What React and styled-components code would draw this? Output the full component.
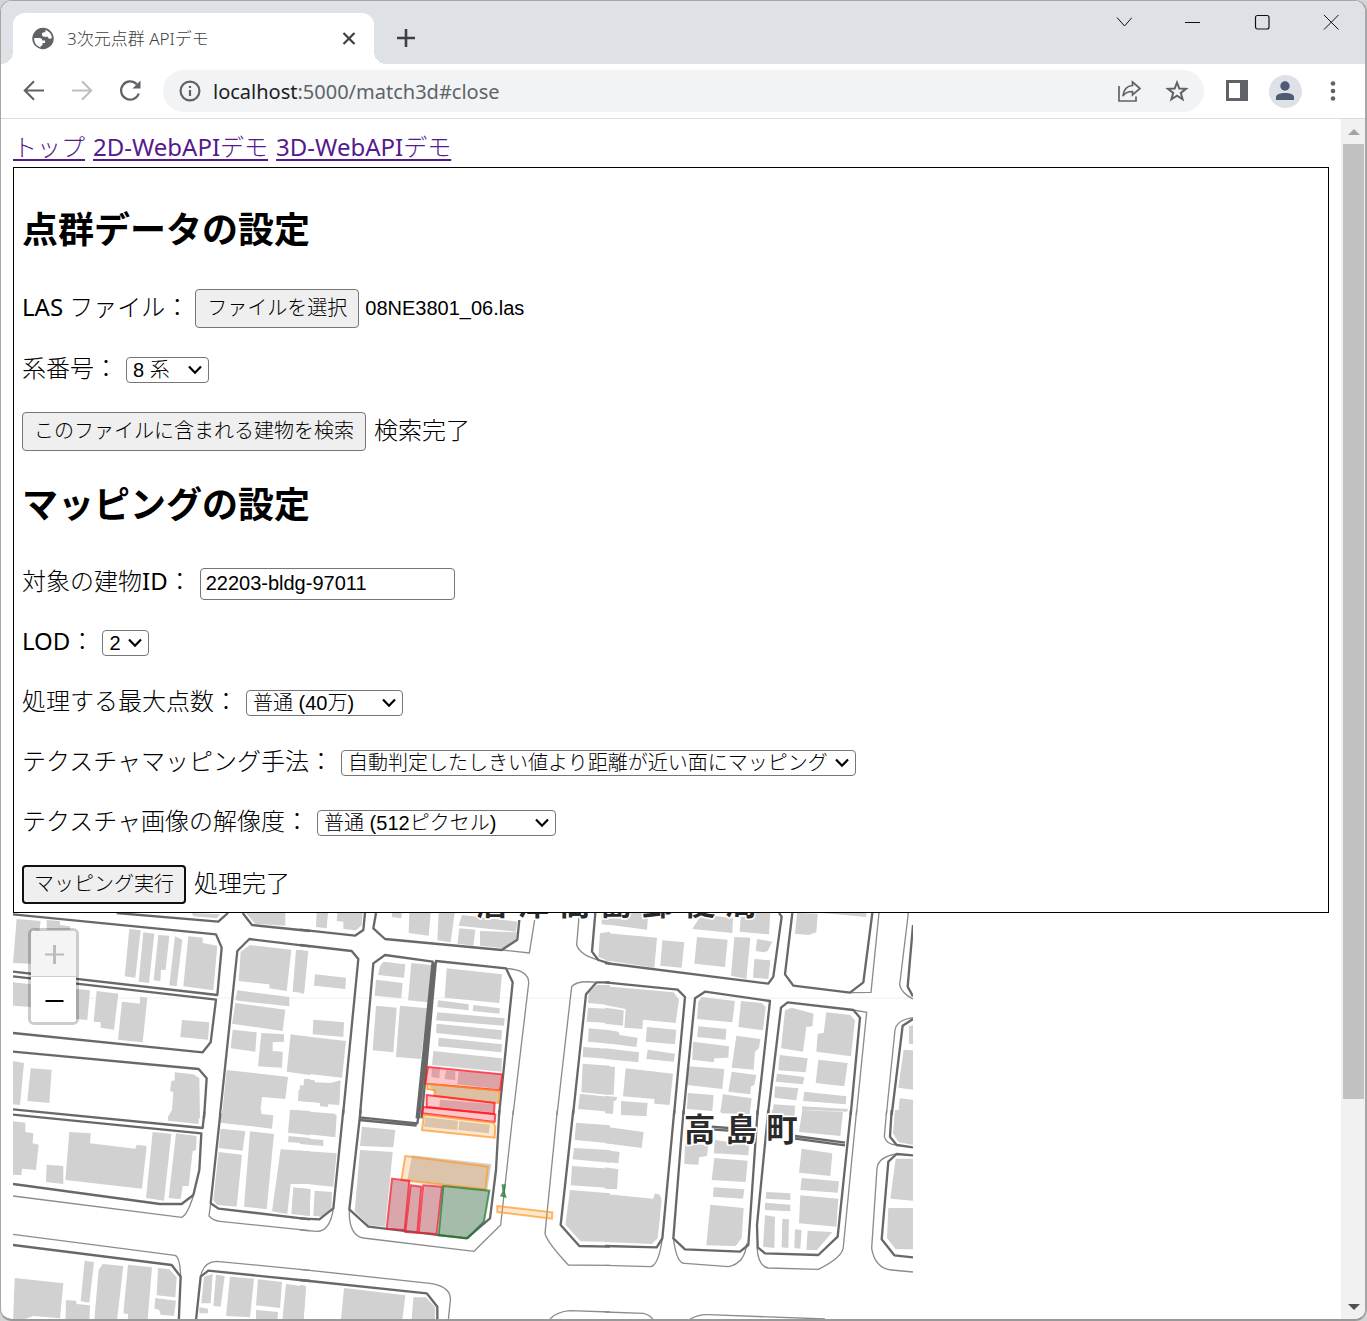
import React, { useRef } from "react";
import styled, { createGlobalStyle } from "styled-components";

const UI_FONT = `"Noto Sans", "Noto Sans CJK JP", sans-serif`;
const PAGE_FONT = `"Noto Sans", "Noto Sans CJK JP Light", "Noto Sans CJK JP", sans-serif`;
const HEADING_FONT = `"Noto Sans", "Noto Sans CJK JP", sans-serif`;
const CONTROL_FONT = `"Liberation Sans", "Noto Sans CJK JP Light", "Noto Sans CJK JP", sans-serif`;

const GlobalStyle = createGlobalStyle`
  *, *::before, *::after { box-sizing: border-box; }
  body { margin: 0; background: #d4d4d4; }
`;

/* ---------- browser window ---------- */

const Window = styled.div`
  height: 100vh;
  display: flex;
  flex-direction: column;
  overflow: hidden;
  background: #fff;
  border: 1px solid #a6a6a6;
  border-right: 2px solid #a6a6a6;
  border-bottom: 2px solid #999;
  border-radius: 12px;
`;

const TabStrip = styled.div`
  display: flex;
  align-items: flex-end;
  flex: none;
  height: 63px;
  padding-left: 12px;
  background: #dee1e6;
`;

const Tab = styled.div`
  position: relative;
  display: flex;
  align-items: center;
  width: 361px;
  height: 51px;
  padding: 0 16px 0 18px;
  background: #fff;
  border-radius: 12px 12px 0 0;

  &::before,
  &::after {
    content: "";
    position: absolute;
    bottom: 0;
    width: 12px;
    height: 12px;
  }
  &::before {
    right: 100%;
    background: radial-gradient(circle at 0 0, #dee1e6 12px, #fff 12px);
  }
  &::after {
    left: 100%;
    background: radial-gradient(circle at 100% 0, #dee1e6 12px, #fff 12px);
  }
`;

const TabTitle = styled.span`
  flex: 1;
  margin-left: 12px;
  font: 300 17px/24px ${UI_FONT};
  color: #3c4043;
  white-space: nowrap;
`;

const IconButton = styled.button`
  display: inline-flex;
  align-items: center;
  justify-content: center;
  flex: none;
  width: ${(p) => p.$w || 48}px;
  height: ${(p) => p.$h || 40}px;
  padding: 0;
  border: 0;
  background: none;
  color: ${(p) => p.$color || "#5f6368"};
`;

const NewTab = styled.div`
  display: flex;
  align-items: center;
  height: 52px;
  margin-left: 16px;
`;

const Caption = styled.div`
  display: flex;
  align-self: flex-start;
  margin-left: auto;
`;

const Toolbar = styled.div`
  display: flex;
  align-items: center;
  flex: none;
  height: 55px;
  padding: 0 8px 0 9px;
  border-bottom: 1px solid #dadce0;
`;

const AddressBar = styled.div`
  display: flex;
  align-items: center;
  flex: 1;
  height: 42px;
  margin: 0 9px;
  padding: 0 3px 0 14px;
  border-radius: 21px;
  background: #f1f3f4;
`;

const Address = styled.div`
  flex: 1;
  margin-left: 10px;
  padding-top: 2px;
  font: 400 20px/30px ${UI_FONT};
  color: #5f6368;
  white-space: nowrap;
  outline: none;
`;

const Host = styled.span`
  color: #202124;
`;

const Avatar = styled.span`
  display: flex;
  align-items: center;
  justify-content: center;
  width: 33px;
  height: 33px;
  border-radius: 50%;
  background: #dee1e6;
  color: #4f5b75;
`;

const Viewport = styled.div`
  display: flex;
  flex: 1;
  min-height: 0;
`;

const Page = styled.main`
  flex: 1;
  min-width: 0;
  overflow: hidden;
  padding: 8px 12px 0;
  font: 400 24px/36px ${PAGE_FONT};
  color: #000;
`;

const ScrollBar = styled.div`
  display: flex;
  flex-direction: column;
  align-items: stretch;
  flex: none;
  width: 24px;
  padding: 0 1px 0 2px;
  background: #f1f1f1;
`;

const ScrollArrow = styled.button`
  display: flex;
  align-items: center;
  justify-content: center;
  height: 25px;
  padding: 0;
  border: 0;
  background: none;
  color: ${(p) => (p.disabled ? "#a3a3a3" : "#505050")};
`;

const Track = styled.div`
  display: flex;
  flex-direction: column;
  flex: 1;
`;

const Thumb = styled.div`
  height: 83%;
  background: #c1c1c1;
`;

/* ---------- page ---------- */

const Nav = styled.nav`
  display: flex;
  gap: 8px;
  height: 40px;
  padding-top: 2px;
`;

const NavLink = styled.a`
  color: #551a8b;
  text-decoration: underline;
  text-decoration-thickness: 2px;
  text-underline-offset: 3px;
`;

const Panel = styled.section`
  padding: 8px;
  border: 1px solid #000;
`;

const Heading = styled.h2`
  margin: 30px 0 36px;
  font: 700 36px/47px ${HEADING_FONT};
`;

const Row = styled.div`
  display: flex;
  align-items: center;
  gap: ${(p) => (p.$tight ? 6 : 8)}px;
  min-height: 36px;
  margin-top: 24px;

  ${Heading} + & {
    margin-top: 0;
  }
`;

const Text = styled.span`
  padding-bottom: 4px;
  line-height: 32px;
  white-space: nowrap;
`;

const PushButton = styled.button`
  height: 39px;
  padding: 0 11px 2px;
  border: 1px solid #767676;
  border-radius: 4px;
  background: #efefef;
  color: #000;
  font: 400 20px/30px ${CONTROL_FONT};
  outline: ${(p) => (p.$focused ? "2px solid #101010" : "none")};
  outline-offset: -2px;
`;

const HiddenFile = styled.input`
  display: none;
`;

const FileName = styled.output`
  padding-bottom: 2px;
  font: 400 20px/30px ${CONTROL_FONT};
`;

const TextBox = styled.input`
  width: 255px;
  height: 32px;
  margin: 4px 0 1px;
  padding: 0 5px 2px;
  border: 1px solid #767676;
  border-radius: 4px;
  background: #fff;
  color: #000;
  font: 400 20px/28px ${CONTROL_FONT};
`;

const SelectBox = styled.span`
  display: inline-grid;
  align-items: center;
  width: ${(p) => p.$width}px;

  > * {
    grid-area: 1 / 1;
  }
  > svg {
    justify-self: end;
    margin-right: 7px;
    pointer-events: none;
  }
`;

const NativeSelect = styled.select`
  appearance: none;
  width: 100%;
  height: 26px;
  padding: 0 6px;
  border: 1px solid #767676;
  border-radius: 4px;
  background: #fff;
  color: #000;
  font: 400 20px/24px ${CONTROL_FONT};
`;

function Select({ id, width, options, value }) {
  return (
    <SelectBox $width={width}>
      <NativeSelect id={id} defaultValue={value}>
        {options.map((o) => (
          <option key={o}>{o}</option>
        ))}
      </NativeSelect>
      <svg width="14" height="10" viewBox="0 0 14 10" fill="none" stroke="#000" strokeWidth="2.2">
        <path d="M1 1.5 7 7.7 13 1.5" />
      </svg>
    </SelectBox>
  );
}

/* ---------- map ---------- */

const MapFrame = styled.div`
  position: relative;
  width: 900px;
  max-width: 100%;
  overflow: hidden;
`;

const MapDrawing = styled.svg`
  display: block;
  width: 900px;
`;

const MapLabel = styled.text`
  font: 700 94px "Noto Sans CJK JP", sans-serif;
  fill: #2a2a2a;
  stroke: #fff;
  stroke-width: 10px;
  stroke-linejoin: round;
  paint-order: stroke;
`;

const ZoomControl = styled.div`
  position: absolute;
  top: 15px;
  left: 15px;
  display: flex;
  flex-direction: column;
  border: 3px solid rgba(0, 0, 0, 0.2);
  border-radius: 6px;
  background-clip: padding-box;
`;

const ZoomButton = styled.button`
  display: flex;
  align-items: center;
  justify-content: center;
  width: 45px;
  height: ${(p) => (p.disabled ? 46 : 45)}px;
  padding: 2px 0 0 2px;
  border: 0;
  border-bottom: ${(p) => (p.disabled ? "1px solid #ccc" : "0")};
  border-radius: ${(p) => (p.disabled ? "3px 3px 0 0" : "0 0 3px 3px")};
  background: ${(p) => (p.disabled ? "#f4f4f4" : "#fff")};
  color: ${(p) => (p.disabled ? "#bbb" : "#000")};
`;

/* Map sheets: origin plus buildings, wide block outlines and thin kerb lines. */
const SHEETS = [
  {
    at: [0, 2715],
    buildings:
      "M50 42 122 48 118 78 95 75 95 176 39 174ZM140 45 180 48 180 60 210 64 210 75 140 75ZM388 72 422 76 406 218 374 214ZM430 82 463 86 447 234 416 230ZM475 90 508 92 497 195 483 194 481 228 461 226ZM525 94 547 104 530 244 508 241ZM565 94 608 98 608 114 652 122 640 256 550 244ZM39 232 92 238 92 306 39 302ZM228 252 270 256 262 345 228 342ZM290 258 355 266 342 374 302 368 302 352 281 350ZM366 290 420 296 420 275 442 278 428 412 354 404ZM546 345 628 352 624 404 541 396ZM39 468 72 474 60 600 39 598ZM92 490 155 494 148 594 82 588ZM524 502 580 508 598 520 600 640 514 640 520 562 510 558 514 528 524 526ZM575 24 660 28 650 40 580 34ZM738 24 856 24 856 62 765 56ZM750 120 874 134 860 258 808 250 808 238 716 228 722 140ZM888 134 925 138 912 264 878 260ZM712 256 868 276 868 304 706 286ZM706 294 856 314 848 378 696 356ZM698 374 770 382 766 440 692 430ZM784 384 852 388 852 410 818 412 818 438 848 440 846 488 774 484ZM872 388 930 396 930 510 860 500ZM680 495 864 516 856 582 786 576 780 630 666 630ZM912 522 930 522 930 590 894 588 896 554 910 552ZM872 614 930 618 930 630 870 630Z",
    wide: "M39 28 648 88 665 128 652 270 39 200M39 214 648 284 632 412 608 442 39 384M350 24 655 50 684 24M728 24 756 60 930 78M930 124 748 102 712 138 660 630M39 440 596 492 620 520 612 640",
    thin: "",
  },
  {
    at: [0, 3330],
    buildings:
      "M39 34 76 38 76 66 100 70 98 100 116 104 108 180 66 176 64 196 39 194ZM140 164 190 168 190 222 138 216ZM208 66 272 70 270 100 406 116 410 104 440 108 426 236 196 210ZM458 66 514 72 492 272 438 264ZM528 70 590 78 588 120 578 124 566 228 548 228 542 268 506 264ZM504 20 516 0 596 0 596 42 504 32ZM664 0 784 0 784 12 820 16 816 56 660 38ZM662 56 736 64 728 122 656 114ZM656 126 726 134 710 290 650 284 640 270ZM750 64 822 72 800 298 732 290ZM870 0 930 6 930 76 864 68ZM866 78 930 84 930 102 864 96ZM842 118 930 124 930 222 872 222 862 312 816 304ZM880 232 930 238 930 318 874 312ZM44 504 190 520 180 625 100 618 39 640ZM254 452 282 456 268 578 242 574ZM198 570 228 572 230 582 270 586 268 640 196 640ZM308 462 370 468 350 640 282 640 296 480ZM384 464 456 472 442 640 384 640 384 612 370 610ZM474 474 508 478 530 502 526 562 470 556ZM466 564 528 572 522 618 482 614 478 600 463 596ZM612 500 638 492 632 580 604 580ZM648 494 674 498 662 590 640 588ZM598 592 624 596 624 610 598 610ZM690 500 762 506 750 622 678 618ZM774 508 846 516 840 594 768 586ZM768 600 834 606 832 640 768 640ZM858 522 918 530 910 640 846 640Z",
    wide: "M39 -2 608 54 613 5M39 14 604 70 598 180 580 255 545 282 480 282 39 222M661 10 632 280 656 296 930 328M39 405 515 465 542 500 536 640M587 640 602 500 625 482 930 513",
    thin: "M39 258 545 322Q562 315 580 258M632 280 627 318Q640 332 660 334L930 362M39 373 525 436Q540 440 542 500M602 500Q610 455 650 454L930 481",
  },
  {
    at: [900, 2715],
    buildings:
      "M50 24 84 24 80 70 48 66ZM112 24 188 24 185 60 168 76 130 72 130 50 110 48ZM276 24 306 24 304 40 276 36ZM328 24 392 24 386 92 326 84ZM416 24 464 24 452 112 412 106ZM486 30 652 50 648 80 476 62ZM478 70 526 74 520 122 472 116ZM540 78 650 82 648 106 610 130 540 122ZM45 208 138 218 136 252 42 242ZM40 344 132 352 130 396 38 388ZM0 134 22 140 12 266 0 264ZM0 392 138 408 126 518 0 504ZM0 540 12 542 12 522 44 526 44 532 90 534 122 526 118 600 84 598 84 606 60 604 60 594 0 588ZM0 618 106 626 106 640 0 640ZM250 170 316 178 312 218 234 210 240 184ZM228 224 308 234 304 280 224 272ZM334 174 396 180 384 292 324 286ZM228 302 290 308 280 442 218 436ZM300 302 382 310 362 462 288 456ZM440 190 606 208 598 294 434 278ZM414 286 506 298 506 316 412 306ZM520 300 600 310 598 326 518 318ZM412 322 614 340 612 362 408 346ZM410 356 606 376 604 404 408 384ZM416 398 606 418 604 442 414 424ZM400 438 606 460 604 500 396 480ZM396 490 420 492 418 520 394 516ZM438 496 466 498 466 526 434 522ZM476 498 602 508 598 552 472 538ZM386 540 594 560 590 590 410 570ZM420 584 584 598 580 622 418 606ZM890 240 930 240 930 300 864 294 866 264ZM864 308 930 312 930 354 860 350ZM866 370 930 376 930 416 864 410ZM850 426 930 432 930 462 848 456ZM848 476 930 482 930 570 844 562ZM840 566 930 576 930 620 834 612ZM905 30 930 30 930 60 905 58ZM900 85 930 80 930 170 895 155Z",
    wide: "M195 24 190 75 165 92 0 74M228 24 220 70 255 102 605 135 652 104 658 45M0 120 155 138 175 162 129 630M180 630 220 175 255 150 398 170 350 640M365 640 408 168 618 190 638 232 597 630M930 176 895 165 876 140 886 24M930 232 890 232 858 268 819 630M403 172 357 640",
    thin: "M605 135 688 144 704 45M618 190Q688 195 686 235L639 630M838 24 830 120Q840 150 895 165M771 630 815 245Q830 225 890 232",
  },
  {
    at: [900, 3330],
    buildings:
      "M0 8 110 16 106 82 0 70ZM0 84 70 90 70 108 0 102ZM0 122 110 130 100 230 0 220ZM0 234 32 238 28 318 0 314ZM44 242 96 246 94 296 74 320 40 318ZM186 50 286 60 280 112 180 108ZM180 120 278 126 256 350 206 346 164 304ZM336 136 574 162 562 240 322 212ZM376 22 474 32 472 60 372 50ZM478 34 570 44 566 70 476 60ZM276 210 328 214 314 358 262 352ZM332 226 364 230 352 368 318 362ZM374 228 426 230 410 372 358 366ZM430 228 568 242 552 334 504 380 416 372ZM828 38 930 46 930 100 824 90ZM822 114 930 120 930 158 818 148ZM816 168 930 176 930 234 812 226ZM810 240 930 250 930 396 842 394 796 344ZM0 524 18 528 10 640 0 640ZM132 534 316 556 306 640 122 640ZM340 562 378 562 406 592 404 640 334 640Z",
    wide: "M178 22 352 40 358 0M178 30 350 47M182 0 148 298 205 350 500 385 570 325 588 180 598 0M130 0 100 295 58 328 0 325M820 0 782 345 838 408 930 410M0 510 380 550 412 590 412 640",
    thin: "M640 0 602 345 522 424 190 384Q145 375 148 298M772 0 735 370Q740 395 805 465L930 466M0 478 390 520Q460 530 450 580L444 640M100 295Q90 365 50 364L0 360M750 627Q770 605 810 602L930 606",
  },
  {
    at: [1815, 2715],
    buildings:
      "M0 24 130 24 126 74 0 58ZM290 28 384 40 382 84 262 72ZM408 24 496 24 492 88 404 80ZM0 84 156 98 148 188 0 166ZM172 106 238 112 230 188 166 182ZM276 96 368 104 360 186 268 176ZM388 96 436 98 424 222 378 212ZM456 102 502 110 488 138 478 142 452 138ZM448 162 496 166 490 222 444 218ZM576 24 638 26 634 82 610 90 570 86ZM650 24 784 24 784 36ZM0 244 206 262 222 284 212 354 114 344 112 372 58 368 62 312 0 300ZM0 308 56 316 54 362 0 356ZM0 374 40 380 44 390 98 398 94 426 0 414ZM0 430 102 442 100 472 0 462ZM126 366 214 374 210 418 122 410ZM128 434 210 446 206 470 124 462ZM0 484 30 486 26 570 0 568ZM62 490 204 506 194 600 148 596 148 582 54 574ZM0 572 36 576 34 586 26 588 24 627 0 625ZM48 588 128 594 124 633 48 630ZM290 276 390 288 382 352 276 342 280 290ZM408 288 470 294 482 306 474 376 400 366ZM280 364 364 372 362 404 276 396ZM264 410 372 424 370 458 328 460 326 472 262 464ZM394 392 466 402 462 430 450 440 446 494 380 488ZM250 484 358 492 352 552 246 540ZM380 500 454 510 448 540 438 544 436 568 370 560ZM248 564 326 570 322 618 246 612ZM354 568 440 580 434 627 346 622ZM540 316 560 308 626 326 622 364 604 366 594 440 528 430ZM664 322 736 330 750 346 738 454 634 440 638 386 656 384ZM524 450 608 460 602 502 520 496ZM516 506 598 516 594 538 512 530ZM510 544 580 550 574 586 508 578ZM640 464 728 474 718 544 632 534ZM598 560 724 574 722 598 594 588ZM506 598 570 602 568 630 502 630ZM592 604 730 612 726 620 590 614ZM912 364 924 360 924 418 912 416ZM896 434 924 436 924 554 880 548ZM884 580 924 584 924 630 880 630Z",
    wide: "M0 174 490 236 505 215 530 35 522 24M562 24 540 208 565 242 735 263 775 232 802 24M0 232 218 254 240 276 207 630M235 630 270 280 300 260 495 288 457 630M489 630 528 308 548 292 745 315 765 338 737 630M924 274 908 245 924 60M924 342 893 362 860 630",
    thin: "M822 24 798 262 735 263M745 315 785 322 754 630M910 24 884 240Q890 265 924 282M924 338Q875 345 870 375L844 630",
  },
  {
    at: [1815, 3330],
    buildings:
      "M48 0 124 0 124 18 48 12ZM0 50 116 66 110 114 0 100ZM0 120 44 126 40 160 0 156ZM0 172 40 178 36 238 0 236ZM0 252 145 266 150 250 164 254 170 270 158 385 140 402 0 396ZM240 100 310 106 306 138 282 142 280 164 238 162ZM330 90 432 104 430 136 326 130ZM328 144 428 152 422 216 320 210ZM326 232 418 238 414 266 324 260ZM316 284 416 294 410 384 392 408 304 406ZM345 0 430 0 430 12 350 10ZM500 0 570 0 568 18 500 14ZM592 0 714 6 706 78 582 66ZM590 116 682 130 676 198 582 188ZM590 204 702 214 698 248 586 240ZM586 256 700 266 694 350 582 340ZM484 246 556 250 556 270 482 266ZM480 278 556 284 556 304 480 300ZM480 316 510 320 508 414 474 410ZM532 326 552 328 550 414 530 412ZM570 358 590 360 586 416 568 414ZM608 362 682 366 636 420 604 420ZM870 0 924 0 924 105 880 96 864 70ZM872 146 924 146 924 272 856 266ZM850 294 924 294 924 418 872 418 846 384Z",
    wide: "M208 0 172 385 155 412 0 408M236 0 232 45 205 385 240 418 405 425 430 405 458 0M490 0 456 345 458 412 480 430 640 435 698 380 738 0M570 78 720 98M570 86 720 106M320 50 370 54M320 58 370 62M860 0 855 80 875 105 924 112M924 136 875 132 850 155 830 388 868 436 924 442",
    thin: "M755 0 715 410Q715 440 640 478L490 474Q460 470 456 412M172 385Q160 470 135 470L0 466M205 385Q215 462 240 460L370 470Q420 460 425 400M845 0 838 80Q845 105 875 105M875 132Q820 140 816 175L800 415Q810 475 860 480L924 486M0 606 115 610Q140 615 150 640M245 635Q275 612 310 614L660 627",
  },
];

const MARKS = [
  { c: "#ff0f1e", d: "M1284 3201 1506 3223 1500 3271 1276 3251Z" },
  { c: "#ff8c1a", d: "M1282 3251 1498 3273 1494 3309 1304 3287 1304 3271 1282 3267Z" },
  { c: "#ff0f1e", d: "M1280 3285 1484 3309 1482 3341 1280 3321Z" },
  { c: "#ff0f1e", d: "M1270 3321 1486 3343 1484 3366 1266 3340Z" },
  { c: "#ff9a2e", d: "M1272 3344 1480 3368 1486 3380 1484 3413 1266 3390Z" },
  { c: "#ff9a2e", d: "M1216 3468 1464 3500 1456 3568 1204 3540Z" },
  { c: "#f01f32", d: "M1176 3536 1228 3542 1214 3690 1160 3686Z" },
  { c: "#f01f32", d: "M1232 3556 1264 3560 1252 3698 1216 3696Z" },
  { c: "#f01f32", d: "M1270 3556 1326 3560 1310 3702 1256 3698Z" },
  { c: "#1f7a2c", d: "M1330 3558 1468 3572 1452 3664 1404 3714 1316 3706Z" },
  { c: "#ff9a2e", d: "M1492 3618 1657 3637 1656 3656 1492 3636Z" },
  { c: "#1f7a2c", d: "M1508 3556 1514 3556 1511 3575 1516 3590 1504 3587 1510 3575Z" },
];

function DistrictMap() {
  return (
    <MapFrame>
      <MapDrawing viewBox="39 2739 2700 1221" role="img" aria-label="高島町 周辺地図">
        <path d="M39 2994H2739" stroke="#f0f0f0" strokeWidth="3" />
        {SHEETS.map((s) => (
          <g key={s.at.join()} transform={`translate(${s.at[0]} ${s.at[1]})`}>
            <path d={s.buildings} fill="#d1d1d1" />
            <path d={s.thin} fill="none" stroke="#8c8c8c" strokeWidth="4" />
            <path d={s.wide} fill="none" stroke="#686868" strokeWidth="7" strokeLinejoin="round" />
          </g>
        ))}
        {MARKS.map((m) => (
          <path key={m.d} d={m.d} fill={m.c} fillOpacity=".24" stroke={m.c} strokeOpacity=".72" strokeWidth="6" />
        ))}
        <MapLabel x="1430 1554 1678 1803 1927 2052 2177" y="2746">唐津高島郵便局</MapLabel>
        <MapLabel x="2052 2177 2299" y="3423">高島町</MapLabel>
      </MapDrawing>
      <ZoomControl>
        <ZoomButton disabled aria-label="拡大">
          <svg width="19" height="19" stroke="currentColor" fill="none">
            <path d="M0 9.5H19" strokeWidth="2" />
            <path d="M9.5 0V19" strokeWidth="3" />
          </svg>
        </ZoomButton>
        <ZoomButton aria-label="縮小">
          <svg width="19" height="19" stroke="currentColor" fill="none">
            <path d="M0.500 10H18.500" strokeWidth="2" />
          </svg>
        </ZoomButton>
      </ZoomControl>
    </MapFrame>
  );
}

/* ---------- icons ---------- */

const Icon = ({ size = 24, children, ...rest }) => (
  <svg width={size} height={size} viewBox="0 0 24 24" fill="none" stroke="currentColor" strokeWidth="2" {...rest}>
    {children}
  </svg>
);

const Globe = () => (
  <svg width="24" height="24" viewBox="0 0 24 24">
    <circle cx="12" cy="11.500" r="10.700" fill="#5f6368" />
    <path
      fill="#fff"
      d="M3.200 11h5c2 0 3.100 1 3.100 2.600h2.800v2.300h-2.500v1.300c0 1.200-1 1.700-2 1.700v1.500c-4-1.100-6.800-4.900-6.400-9.400ZM14.300 3c3.600 1 6.300 4 6.600 7.800-.8 1.300-2.800 1.400-3.600.2-.5-.8-.5-1.300-1.500-1.300h-2.600c-1.500 0-2.300-1-2.300-2.200 0-1.500 1-2.300 2.400-2.300h1Z"
    />
  </svg>
);

export default function App() {
  const fileRef = useRef(null);
  return (
    <>
      <GlobalStyle />
      <Window>
        <TabStrip>
          <Tab>
            <Globe />
            <TabTitle>3次元点群 APIデモ</TabTitle>
            <IconButton $w={18} $h={26} $color="#3c4043" aria-label="タブを閉じる">
              <svg width="14" height="14" viewBox="0 0 14 14" stroke="currentColor" strokeWidth="2.2">
                <path d="M1.500 1 12.500 12M12.500 1 1.500 12" />
              </svg>
            </IconButton>
          </Tab>
          <NewTab>
            <IconButton $w={32} $h={32} $color="#3c4043" aria-label="新しいタブ">
              <svg width="18" height="18" viewBox="0 0 18 18" stroke="currentColor" strokeWidth="2.600">
                <path d="M9 0V18M0 9H18" />
              </svg>
            </IconButton>
          </NewTab>
          <Caption>
            <IconButton $w={69} $h={42} $color="#111" aria-label="タブを検索">
              <svg width="16" height="10" fill="none" stroke="currentColor">
                <path d="M1 0.500 8.500 9 16 0.500" />
              </svg>
            </IconButton>
            <IconButton $w={69} $h={42} $color="#111" aria-label="最小化">
              <svg width="15" height="1">
                <path d="M0 .5H15" stroke="currentColor" />
              </svg>
            </IconButton>
            <IconButton $w={69} $h={42} $color="#111" aria-label="最大化">
              <svg width="16" height="16" fill="none" stroke="currentColor" strokeWidth="1.200">
                <rect x="1.500" y="1.500" width="13.500" height="13.500" rx="2" />
              </svg>
            </IconButton>
            <IconButton $w={69} $h={42} $color="#111" aria-label="閉じる">
              <svg width="16" height="16" stroke="currentColor">
                <path d="M1 1 15.500 15.500M15.500 1 1 15.500" />
              </svg>
            </IconButton>
          </Caption>
        </TabStrip>

        <Toolbar>
          <IconButton aria-label="戻る">
            <Icon size={24}>
              <path d="M22 11.500H3.500M12 2.300 2.800 11.500 12 20.700" strokeWidth="2.100" />
            </Icon>
          </IconButton>
          <IconButton $color="#bdbfc2" aria-label="進む">
            <Icon size={24}>
              <path d="M2 11.500H20.500M12 2.300 21.200 11.500 12 20.700" strokeWidth="2.100" />
            </Icon>
          </IconButton>
          <IconButton aria-label="再読み込み">
            <Icon size={24}>
              <path d="M20.800 14.500A9.100 9.100 0 1 1 18.800 5.300" strokeWidth="2.200" />
              <path d="M22.500 1.500V9.500H14.500Z" fill="currentColor" stroke="none" />
            </Icon>
          </IconButton>
          <AddressBar>
            <Icon size={26} color="#5f6368">
              <circle cx="12" cy="12" r="8.700" />
              <path d="M12 11V16.500M12 7.300V9.300" />
            </Icon>
            <Address role="textbox" aria-label="アドレス" contentEditable suppressContentEditableWarning spellCheck={false}>
              <Host>localhost</Host>:5000/match3d#close
            </Address>
            <IconButton aria-label="共有">
              <Icon size={24} strokeWidth="1.700">
                <path d="M2 7V22H19V17.500" />
                <path d="M15.500 3 23 9.500 15.500 16V12.500C11 12.500 8 13.700 6 17 6.500 11.500 9.500 7 15.500 6.500Z" />
              </Icon>
            </IconButton>
            <IconButton aria-label="ブックマーク">
              <Icon size={24}>
                <path d="M12 3.500 14.300 9.500 21 9.800 15.800 13.900 17.600 20.300 12 16.700 6.400 20.300 8.200 13.900 3 9.800 9.700 9.500Z" strokeWidth="2" />
              </Icon>
            </IconButton>
          </AddressBar>
          <IconButton aria-label="サイドパネル">
            <svg width="22" height="22" fill="currentColor">
              <path fillRule="evenodd" d="M0 0H22V21H0ZM3 3V18H14V3Z" />
            </svg>
          </IconButton>
          <IconButton aria-label="プロフィール">
            <Avatar>
              <svg width="20" height="20" viewBox="0 0 20 20" fill="currentColor">
                <circle cx="10" cy="5" r="4.700" />
                <path d="M1 19V16C1 10.500 19 10.500 19 16V19Z" />
              </svg>
            </Avatar>
          </IconButton>
          <IconButton aria-label="メニュー">
            <svg width="6" height="20" fill="currentColor">
              <circle cx="3" cy="2.500" r="2.300" />
              <circle cx="3" cy="10" r="2.300" />
              <circle cx="3" cy="17.500" r="2.300" />
            </svg>
          </IconButton>
        </Toolbar>

        <Viewport>
          <Page>
            <Nav>
              <NavLink href="#top">トップ</NavLink>
              <NavLink href="#match2d">2D-WebAPIデモ</NavLink>
              <NavLink href="#match3d">3D-WebAPIデモ</NavLink>
            </Nav>
            <Panel>
              <Heading>点群データの設定</Heading>
              <Row $tight>
                <Text as="label" htmlFor="las">LAS ファイル：</Text>
                <HiddenFile ref={fileRef} id="las" type="file" accept=".las" />
                <PushButton type="button" onClick={() => fileRef.current.click()}>ファイルを選択</PushButton>
                <FileName htmlFor="las">08NE3801_06.las</FileName>
              </Row>
              <Row>
                <Text as="label" htmlFor="zone">系番号：</Text>
                <Select id="zone" width={83} value="8 系" options={["7 系", "8 系", "9 系"]} />
              </Row>
              <Row>
                <PushButton type="button">このファイルに含まれる建物を検索</PushButton>
                <Text>検索完了</Text>
              </Row>

              <Heading>マッピングの設定</Heading>
              <Row>
                <Text as="label" htmlFor="bldg">対象の建物ID：</Text>
                <TextBox id="bldg" type="text" defaultValue="22203-bldg-97011" />
              </Row>
              <Row>
                <Text as="label" htmlFor="lod">LOD：</Text>
                <Select id="lod" width={47} value="2" options={["1", "2"]} />
              </Row>
              <Row>
                <Text as="label" htmlFor="points">処理する最大点数：</Text>
                <Select id="points" width={157} value="普通 (40万)" options={["普通 (40万)"]} />
              </Row>
              <Row>
                <Text as="label" htmlFor="method">テクスチャマッピング手法：</Text>
                <Select
                  id="method"
                  width={515}
                  value="自動判定したしきい値より距離が近い面にマッピング"
                  options={["自動判定したしきい値より距離が近い面にマッピング"]}
                />
              </Row>
              <Row>
                <Text as="label" htmlFor="resolution">テクスチャ画像の解像度：</Text>
                <Select id="resolution" width={239} value="普通 (512ピクセル)" options={["普通 (512ピクセル)"]} />
              </Row>
              <Row>
                <PushButton type="button" $focused>マッピング実行</PushButton>
                <Text>処理完了</Text>
              </Row>
            </Panel>
            <DistrictMap />
          </Page>
          <ScrollBar>
            <ScrollArrow disabled aria-label="上へスクロール">
              <svg width="12" height="6" fill="currentColor">
                <path d="M0 6 6 0 12 6Z" />
              </svg>
            </ScrollArrow>
            <Track>
              <Thumb />
            </Track>
            <ScrollArrow aria-label="下へスクロール">
              <svg width="12" height="6" fill="currentColor">
                <path d="M0 0H12L6 6Z" />
              </svg>
            </ScrollArrow>
          </ScrollBar>
        </Viewport>
      </Window>
    </>
  );
}
